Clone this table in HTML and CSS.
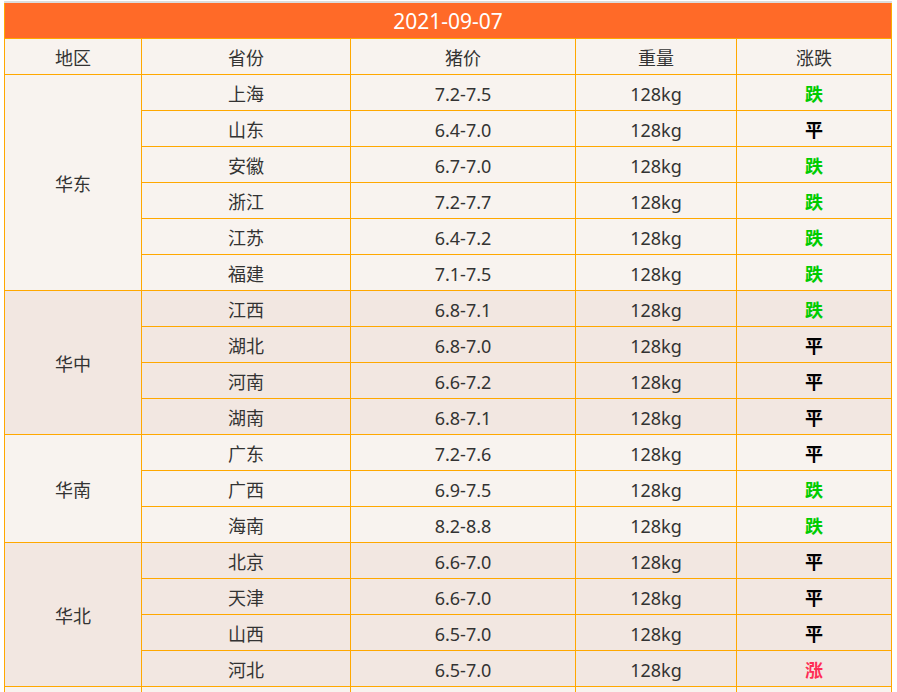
FILE: index.html
```html
<!DOCTYPE html>
<html lang="zh-CN">
<head>
<meta charset="utf-8">
<title>猪价</title>
<link rel="stylesheet" href="styles.css">
</head>
<body>
<table class="price">
  <colgroup>
    <col class="c1"><col class="c2"><col class="c3"><col class="c4"><col class="c5">
  </colgroup>
  <thead>
    <tr><th class="title" colspan="5">2021-09-07</th></tr>
    <tr class="head"><th>地区</th><th>省份</th><th>猪价</th><th>重量</th><th>涨跌</th></tr>
  </thead>
  <tbody class="g-light">
    <tr><td rowspan="6" class="region">华东</td><td>上海</td><td>7.2-7.5</td><td>128kg</td><td class="down">跌</td></tr>
    <tr><td>山东</td><td>6.4-7.0</td><td>128kg</td><td class="flat">平</td></tr>
    <tr><td>安徽</td><td>6.7-7.0</td><td>128kg</td><td class="down">跌</td></tr>
    <tr><td>浙江</td><td>7.2-7.7</td><td>128kg</td><td class="down">跌</td></tr>
    <tr><td>江苏</td><td>6.4-7.2</td><td>128kg</td><td class="down">跌</td></tr>
    <tr><td>福建</td><td>7.1-7.5</td><td>128kg</td><td class="down">跌</td></tr>
  </tbody>
  <tbody class="g-dark">
    <tr><td rowspan="4" class="region">华中</td><td>江西</td><td>6.8-7.1</td><td>128kg</td><td class="down">跌</td></tr>
    <tr><td>湖北</td><td>6.8-7.0</td><td>128kg</td><td class="flat">平</td></tr>
    <tr><td>河南</td><td>6.6-7.2</td><td>128kg</td><td class="flat">平</td></tr>
    <tr><td>湖南</td><td>6.8-7.1</td><td>128kg</td><td class="flat">平</td></tr>
  </tbody>
  <tbody class="g-light">
    <tr><td rowspan="3" class="region">华南</td><td>广东</td><td>7.2-7.6</td><td>128kg</td><td class="flat">平</td></tr>
    <tr><td>广西</td><td>6.9-7.5</td><td>128kg</td><td class="down">跌</td></tr>
    <tr><td>海南</td><td>8.2-8.8</td><td>128kg</td><td class="down">跌</td></tr>
  </tbody>
  <tbody class="g-dark">
    <tr><td rowspan="4" class="region">华北</td><td>北京</td><td>6.6-7.0</td><td>128kg</td><td class="flat">平</td></tr>
    <tr><td>天津</td><td>6.6-7.0</td><td>128kg</td><td class="flat">平</td></tr>
    <tr><td>山西</td><td>6.5-7.0</td><td>128kg</td><td class="flat">平</td></tr>
    <tr><td>河北</td><td>6.5-7.0</td><td>128kg</td><td class="up">涨</td></tr>
  </tbody>
  <tbody class="g-light">
    <tr><td></td><td></td><td></td><td></td><td></td></tr>
  </tbody>
</table>
</body>
</html>
```

FILE: styles.css
```css
html, body {
  margin: 0;
  padding: 0;
  background: #ffffff;
}

body {
  font-family: "Noto Sans", "Noto Sans CJK SC", sans-serif;
  color: #333333;
}

.price {
  margin: 1px 0 0 4px;
  width: 888px;
  border-collapse: collapse;
  table-layout: fixed;
  border-left: 1px solid #ffa800;
  border-right: 1px solid #ffa800;
}

.c1 { width: 137px; }
.c2 { width: 209px; }
.c3 { width: 225px; }
.c4 { width: 161px; }
.c5 { width: 155px; }

.price th,
.price td {
  height: 33px;
  padding: 2px 0 0 0;
  border: 1px solid #ffa800;
  text-align: center;
  vertical-align: middle;
  font-size: 18px;
  font-weight: normal;
  line-height: 20px;
}

.price th.title {
  border-top: 2px solid #dcdcdc;
  background: #ff6a28;
  color: #ffffff;
  font-size: 21px;
  height: 34px;
  padding-top: 1px;
}

.head th {
  background: #f8f3ef;
}

.g-light td {
  background: #f8f3ef;
}

.g-dark td {
  background: #f2e7e1;
}

.price td.down {
  color: #00cc00;
  font-weight: bold;
}

.price td.flat {
  color: #000000;
  font-weight: bold;
}

.price td.up {
  color: #ff2d55;
  font-weight: bold;
}
```
